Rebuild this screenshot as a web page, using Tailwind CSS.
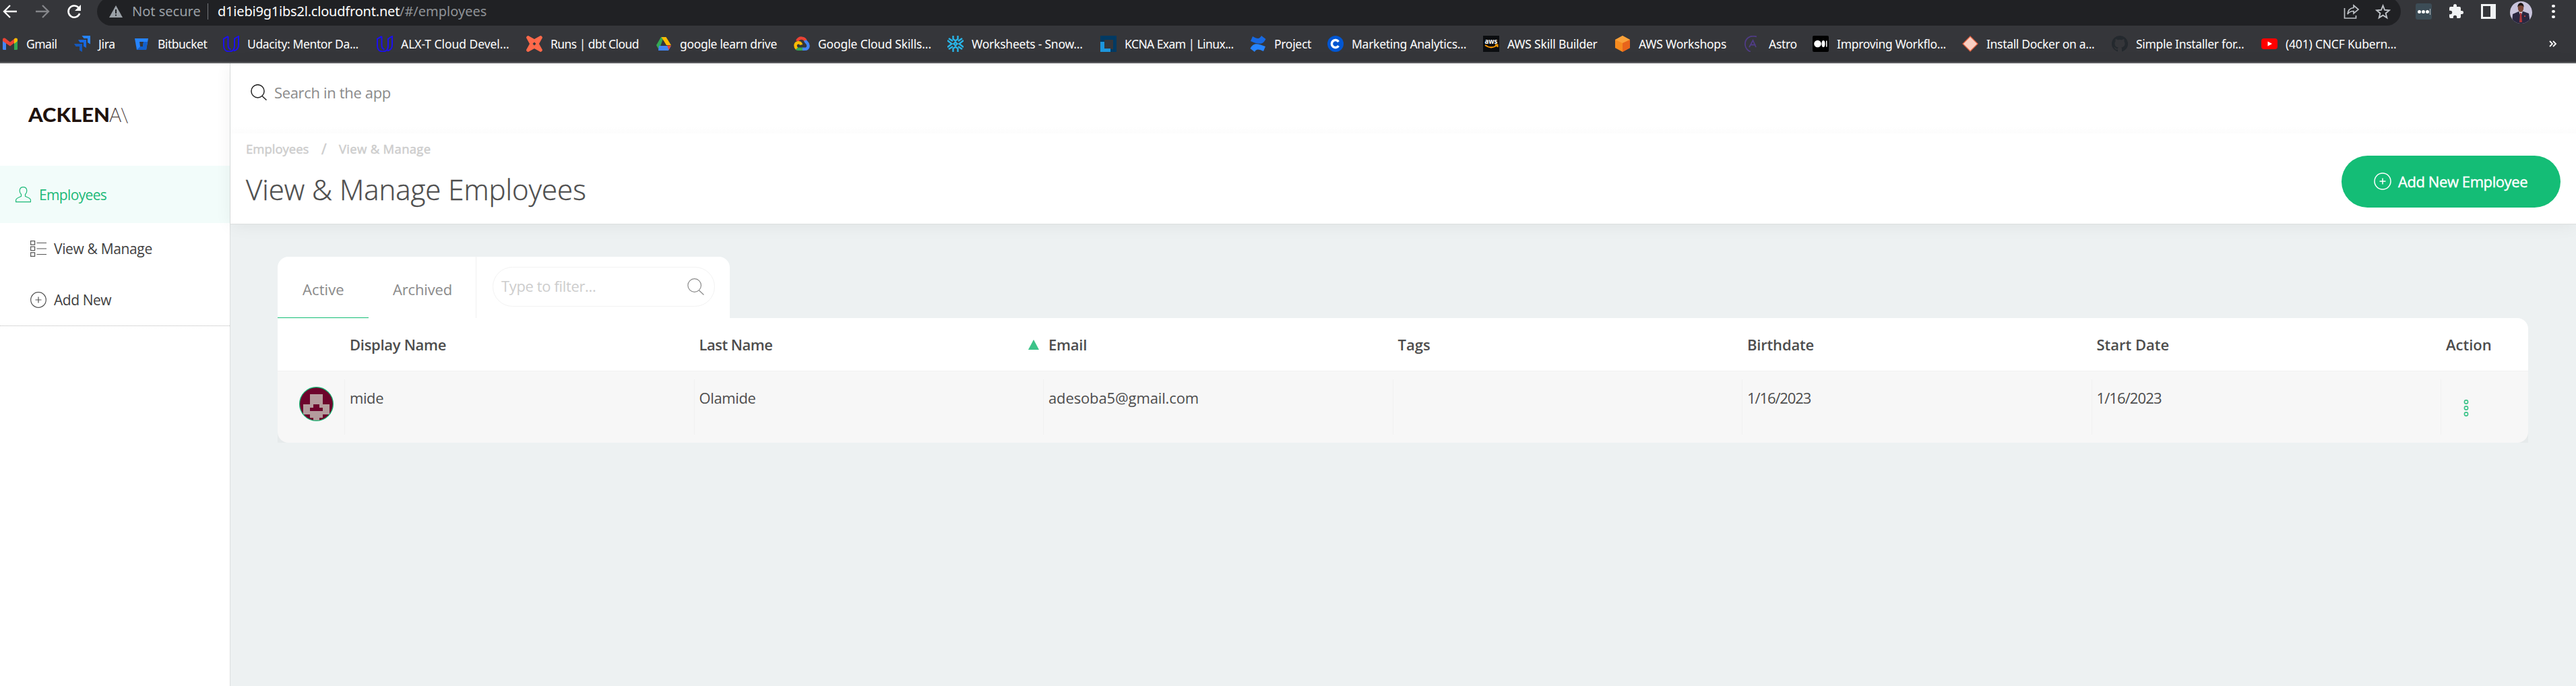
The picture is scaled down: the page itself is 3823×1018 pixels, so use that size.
<!DOCTYPE html>
<html lang="en">
<head>
<meta charset="utf-8">
<title>Employees</title>
<script src="https://cdn.jsdelivr.net/npm/@tailwindcss/browser@4"></script>
</head>
<body class="w-[3823px] h-[1018px] overflow-hidden flex flex-col bg-[#edf1f2] font-['Open_Sans',sans-serif] text-[#4d4d4d] whitespace-nowrap">

<!-- Browser toolbar -->
<div class="h-[94px] shrink-0 bg-[#35363a] border-b-2 border-[#5f6063] font-['Noto_Sans',sans-serif] text-white">
  <div class="h-[38px] flex items-start overflow-hidden">
    <div class="w-[144px] h-[34px] shrink-0 flex items-center pl-[3px]">
      <svg class="w-6 h-6 mr-[24px]" viewBox="0 0 24 24" fill="none" stroke="#fff" stroke-width="2.3"><path d="M22 12H3M12 3l-9 9 9 9"/></svg>
      <svg class="w-6 h-6 mr-[23px]" viewBox="0 0 24 24" fill="none" stroke="#85868a" stroke-width="2.3"><path d="M2 12h19M12 3l9 9-9 9"/></svg>
      <svg class="w-6 h-6" viewBox="0 0 24 24" fill="none" stroke="#fff" stroke-width="2.6"><path d="M20.2 15a8.6 8.6 0 1 1-1.8-8.8"/><path d="M22 2v9h-9z" fill="#fff" stroke="none"/></svg>
    </div>
    <div class="w-[3419px] h-[42px] -mt-1 rounded-full shrink-0 bg-[#202124] flex items-center text-[20px] leading-6 pl-[18px] pr-[15px]">
      <svg class="w-5 h-[18px] mr-[14px]" viewBox="0 0 20 18"><path d="M10 0l10 18H0z" fill="#9aa0a6"/><path d="M9 6h2v6H9zM9 13.500h2v2H9z" fill="#202124"/></svg>
      <span class="w-[101px] text-[#9aa0a6]">Not secure</span>
      <span class="w-px h-6 bg-[#74777b] mx-[10px] ml-[11px]"></span>
      <span class="w-[270px] ml-[4px] tracking-[-0.2px]">d1iebi9g1ibs2l.cloudfront.net</span>
      <span class="text-[#8f9296]">/#/employees</span>
      <svg class="ml-auto w-6 h-[22px]" viewBox="0 0 24 22" fill="none" stroke="#bdc1c6" stroke-width="1.7"><path d="M1.500 6v15h17v-4M15 2l7 6-7 6v-3.500c-4.500 0-7 1.500-9 4.500.5-5 3-9 9-9.500z"/></svg>
      <svg class="ml-[23px] w-[23px] h-[23px]" viewBox="0 0 24 24" fill="none" stroke="#bdc1c6" stroke-width="2"><path d="M12 2.500l2.700 6.700 7.100.5-5.500 4.600 1.800 7-6.100-3.900-6.100 3.900 1.800-7-5.500-4.600 7.100-.5z"/></svg>
    </div>
    <div class="flex items-center h-[34px] pl-[22px]">
      <div class="w-6 h-6 rounded-[3px] bg-[#3c4c56] flex items-center justify-center gap-[1px]"><i class="size-[5px] rounded-full bg-white"></i><i class="size-[5px] rounded-full bg-white"></i><i class="size-[5px] rounded-full bg-white"></i><i class="w-px h-[9px] bg-[#b8c0c5]"></i></div>
      <svg class="ml-[24px] w-6 h-6" viewBox="0 0 24 24" fill="#f1f3f4"><path d="M20.500 11H19V7a2 2 0 0 0-2-2h-4V3.500a2.500 2.500 0 0 0-5 0V5H4a2 2 0 0 0-2 2v3.800h1.500a2.700 2.700 0 0 1 0 5.400H2V20a2 2 0 0 0 2 2h3.800v-1.500a2.700 2.700 0 0 1 5.400 0V22H17a2 2 0 0 0 2-2v-4h1.500a2.500 2.500 0 0 0 0-5z"/></svg>
      <div class="ml-[25px] w-[22px] h-[22px] border-3 border-[#f1f3f4] flex justify-end"><i class="w-[5px] h-full bg-[#f1f3f4]"></i></div>
      <svg class="ml-[21px] mt-[2px] w-[33px] h-[33px]" viewBox="0 0 33 33"><clipPath id="av"><circle cx="16.500" cy="16.500" r="16.500"/></clipPath><g clip-path="url(#av)"><path fill="#c9c4dc" d="M0 0h33v33H0z"/><path fill="#2a2740" d="M3 33l1-14 9-4h7l8 3 2 15z"/><path fill="#e8e3ee" d="M13 14l3 9 3-9z"/><path fill="#b3363a" d="M15 17h2l1 14h-4zM21 21h2v2h-2z"/><ellipse cx="16" cy="10" rx="4.200" ry="6" fill="#7a4536"/><path fill="#1c1513" d="M11.500 9c-1-9 10-9 9 0-1-4-8-4-9 0z"/></g></svg>
      <div class="ml-[29px] flex flex-col gap-[3.500px]"><i class="size-[4.500px] rounded-full bg-white"></i><i class="size-[4.500px] rounded-full bg-white"></i><i class="size-[4.500px] rounded-full bg-white"></i></div>
    </div>
  </div>
  <!-- Bookmarks -->
  <div class="h-[54px] flex items-center text-[17.5px] leading-6 pl-[3px] [&>svg]:w-6 [&>svg]:h-6 [&>svg]:shrink-0 [&>svg]:mr-3 [&>span]:shrink-0">
    <svg viewBox="0 0 24 24"><path fill="#4285f4" d="M1 6h5v15H2.500A1.500 1.500 0 0 1 1 19.500z"/><path fill="#34a853" d="M18 6h5v13.500a1.500 1.500 0 0 1-1.500 1.500H18z"/><path fill="#ea4335" d="M1 7V5.500C1 3.500 3.500 3 5 4l7 5.500L19 4v6l-7 5.500L1 8z"/><path fill="#fbbc04" d="M18 5l1-1c2-1 4 0 4 1.800V8l-5 4z"/></svg><span class="w-[71px] tracking-[-0.5px]">Gmail</span>
    <svg viewBox="0 0 24 24" fill="#2684ff"><path d="M11.500 0H24v12.500l-4-2.500V4h-5.500z"/><path fill="#1868e0" d="M6 6h12v12l-4-2.300V10H8.500z"/><path fill="#1558bc" d="M0 12h12v12l-4-2.300V16H2.500z"/></svg><span class="w-[52px] tracking-[-0.3px]">Jira</span>
    <svg viewBox="0 0 24 24"><path fill="#2684ff" d="M2 4h20l-3 17H5z"/><path fill="#35363a" d="M9 9h6l-1 7h-4z"/><path fill="#1360cc" d="M15 9h6l-2 12H5l5-5h4z"/></svg><span class="w-[97px] tracking-[-0.5px]">Bitbucket</span>
    <svg viewBox="0 0 24 24" fill="none" stroke="#1c10ee" stroke-width="2"><path d="M7.500 1L1 4.500V15c0 5 3 8.500 8 8.500 6 0 8-4 8-8.500V4.500L23 1v13c0 5-3 7.500-7 8.500M7.500 1v13c0 4 1.500 5.500 4 6.500"/></svg><span class="w-[192px] tracking-[-0.37px]">Udacity: Mentor Da...</span>
    <svg viewBox="0 0 24 24" fill="none" stroke="#1c10ee" stroke-width="2"><path d="M7.500 1L1 4.500V15c0 5 3 8.500 8 8.500 6 0 8-4 8-8.500V4.500L23 1v13c0 5-3 7.500-7 8.500M7.500 1v13c0 4 1.500 5.500 4 6.500"/></svg><span class="w-[186px] tracking-[-0.05px]">ALX-T Cloud Devel...</span>
    <svg viewBox="0 0 24 24"><path fill="#ff694a" d="M3 0l9 5 9-5c2 0 3 2 3 3l-5 9 5 9c0 2-2 3-3 3l-9-5-9 5c-2 0-3-2-3-3l5-9-5-9c0-2 2-3 3-3z"/><path fill="#35363a" d="M12 9.500l2.500 2.500-2.500 2.500L9.500 12z"/></svg><span class="w-[156px] tracking-[-0.55px]">Runs | dbt Cloud</span>
    <svg viewBox="0 0 24 24"><path fill="#34a853" d="M8 2h4l-7 19L1 14z"/><path fill="#fbbc04" d="M8.500 2h7L23 14h-7z"/><path fill="#4285f4" d="M5 15h18l-4 7H4z"/><path fill="#ea4335" d="M17 14.500h6L19.500 21z"/><path fill="#35363a" d="M12 8l3 6.500H9z"/></svg><span class="w-[169px] tracking-[-0.32px]">google learn drive</span>
    <svg viewBox="0 0 24 24" fill="none" stroke-width="4.500"><path stroke="#ea4335" d="M5 8c3-6.500 11-5 12.500-.5"/><path stroke="#4285f4" d="M17 7c1 3.500 4.500 3 4.500 8 0 3-2 4.800-5 4.800h-4"/><path stroke="#34a853" d="M13 19.800H7c-1.500 0-2.500-.5-3-1"/><path stroke="#fbbc04" d="M4.500 19c-3-3-2.500-7.500 1-8.500 3-1 5 .5 5.500 3"/></svg><span class="w-[192px] tracking-[-0.13px]">Google Cloud Skills...</span>
    <svg viewBox="0 0 24 24" fill="none" stroke="#29b5e8" stroke-width="2.400"><path d="M12 9.500l2.500 2.500-2.500 2.500L9.500 12zM8.500 0v5L12 7.500 15.500 5V0M8.500 24v-5l3.500-2.500 3.500 2.500v5M0 7l6.500 5L0 17M24 7l-6.500 5 6.500 5M2 4l6 4M22 4l-6 4M2 20l6-4M22 20l-6-4"/></svg><span class="w-[191px] tracking-[-0.23px]">Worksheets - Snow...</span>
    <svg viewBox="0 0 24 24"><path fill="#003a63" d="M0 0h24v24H0z"/><path fill="#35363a" d="M6 6h13v14H6z"/><path fill="#1d96dc" d="M0 9h6v10h9v5H0z"/></svg><span class="w-[186px] tracking-[-0.58px]">KCNA Exam | Linux...</span>
    <svg viewBox="0 0 24 24"><path fill="#1868e0" d="M23.500 5c-4 8-9 9-22.500 3l3-7c8 5 11 3 13-1z"/><path fill="#2684ff" d="M.5 19c4-8 9-9 22.500-3l-3 7c-8-4-11-3-13 1z"/></svg><span class="w-[79px] tracking-[-0.3px]">Project</span>
    <svg viewBox="0 0 24 24"><circle cx="12" cy="12" r="12" fill="#0056d2"/><path d="M16.500 9A5.500 5.500 0 1 0 16.500 15" fill="none" stroke="#fff" stroke-width="3.500"/></svg><span class="w-[195px] tracking-[-0.27px]">Marketing Analytics...</span>
    <svg viewBox="0 0 24 24"><path fill="#0b0d10" d="M0 0h24v24H0z"/><text x="2.500" y="12" fill="#fff" font-size="10" font-weight="700" textLength="19" lengthAdjust="spacingAndGlyphs">aws</text><path d="M3 14c6 4.500 12 4.500 18 0M18 13.500h3.500V17" fill="none" stroke="#f90" stroke-width="2"/></svg><span class="w-[159px] tracking-[-0.2px]">AWS Skill Builder</span>
    <svg viewBox="0 0 24 24"><path fill="#f68b1f" d="M12 0l11 6v12l-11 6L1 18V6z"/><path fill="#f9a13a" d="M12 0l11 6-11 5L1 6z"/><path fill="#e8641b" d="M12 11l11-5v12l-11 6z"/></svg><span class="w-[157px] tracking-[-0.22px]">AWS Workshops</span>
    <svg viewBox="0 0 24 24" fill="none" stroke="#503c86" stroke-width="1.800"><path d="M18 1.500C8-2 0 5 1 14c.5 4.500 4 8.500 8 9.500M7 17l5.500-10L17 17M9.500 13.500h7"/></svg><span class="w-[65px] tracking-[-0.3px]">Astro</span>
    <svg viewBox="0 0 24 24"><rect width="24" height="24" rx="2" fill="#000"/><circle cx="7.500" cy="12" r="5.300" fill="#fff"/><ellipse cx="16" cy="12" rx="2.500" ry="5" fill="#fff"/><path fill="#fff" d="M20 7.500h1.500v9H20z"/></svg><span class="w-[186px] tracking-[-0.3px]">Improving Workflo...</span>
    <svg viewBox="0 0 24 24"><path fill="#f9cfc2" stroke="#e2603e" stroke-width="1.300" d="M12 1l11 11-11 11L1 12z"/></svg><span class="w-[186px] tracking-[-0.32px]">Install Docker on a...</span>
    <svg viewBox="0 0 24 24"><path fill="#24292e" d="M12 0a12 12 0 0 0-3.800 23.400c.6.100.8-.3.800-.6v-2.200c-3.300.7-4-1.400-4-1.400-.6-1.400-1.400-1.800-1.400-1.800-1-.7.1-.7.1-.7 1.200 0 1.900 1.200 1.900 1.200 1 1.800 2.800 1.300 3.500 1 0-.8.400-1.300.700-1.600-2.600-.3-5.400-1.300-5.400-5.900 0-1.300.5-2.400 1.200-3.200-.1-.3-.5-1.500.1-3.200 0 0 1-.3 3.300 1.200a11 11 0 0 1 6 0c2.300-1.500 3.300-1.200 3.300-1.200.6 1.700.2 2.900.1 3.200.8.800 1.200 1.900 1.200 3.200 0 4.600-2.800 5.600-5.500 5.900.5.400.9 1.100.9 2.200v3.300c0 .3.200.7.800.6A12 12 0 0 0 12 0"/></svg><span class="w-[186px] tracking-[-0.3px]">Simple Installer for...</span>
    <svg viewBox="0 0 24 24"><rect y="4" width="24" height="16" rx="4" fill="#f00"/><path fill="#fff" d="M9.500 8.500l6.500 3.500-6.500 3.500z"/></svg><span class="w-[166px] tracking-[-0.2px]">(401) CNCF Kubern...</span>
    <svg class="ml-auto !mr-[23px]" viewBox="0 0 24 24" fill="none" stroke="#fff" stroke-width="1.800"><path d="M8 8l4 4-4 4M13 8l4 4-4 4"/></svg>
  </div>
</div>

<div class="flex flex-1 min-h-0">
  <!-- Sidebar -->
  <aside class="w-[342px] shrink-0 bg-white border-r border-[#dcdfdf] text-[21px] leading-7">
    <div class="h-[152px] pt-[60px] pl-[42px]">
      <svg class="w-[160px] h-8" viewBox="0 0 160 32"><g font-family="Lato, sans-serif" font-size="28.500"><text x="0" y="27" font-weight="900" fill="#1f120d" textLength="121" lengthAdjust="spacingAndGlyphs">ACKLEN</text><text x="120" y="27" font-weight="300" fill="#4b403c" textLength="29" lengthAdjust="spacingAndGlyphs">A\</text></g></svg>
    </div>
    <a class="h-[85px] bg-[#f2fcfa] flex items-center pl-[23px] text-[#1cb978] tracking-[-0.65px]">
      <svg class="w-[23px] h-6 mr-3" viewBox="0 0 23 24" fill="none" stroke="#1cb978" stroke-width="1.200"><path d="M8.500 11.500C6.500 9.500 6 7 6.300 5 6.700 2 8.800.7 11.500.7S16.300 2 16.700 5c.3 2-.2 4.500-2.200 6.500v2.800c2 1.500 8 2 8 6v2.300H.6v-2.300c0-4 6-4.500 7.900-6z"/></svg>Employees
    </a>
    <a class="h-[76px] flex items-center pl-[45px] text-[#3f3f3f] tracking-[-0.35px]">
      <svg class="w-6 h-6 mr-[11px]" viewBox="0 0 24 24" fill="none" stroke="#555" stroke-width="1.200"><path d="M.6.600h6v5.500h-6zM.6 9.200h6v5.500h-6zM.6 17.800h6v5.500h-6zM9.500 3.500H24M9.500 12H24M9.500 20.500H24"/></svg>View &amp; Manage
    </a>
    <a class="h-[76px] flex items-center pl-[45px] text-[#3f3f3f] tracking-[-0.45px]">
      <svg class="w-6 h-6 mr-[11px]" viewBox="0 0 24 24" fill="none" stroke="#555" stroke-width="1.200"><circle cx="12" cy="12" r="11.300"/><path d="M12 7.500v9M7.500 12h9"/></svg>Add New
    </a>
    <div class="border-t border-dotted border-[#b5b5b5]"></div>
  </aside>

  <main class="flex-1 min-w-0">
    <!-- Global search and page header -->
    <header class="bg-white border-b border-[#dcdfdf] shadow-[0_2px_24px_rgba(0,0,0,0.06)] h-[239px] pl-[23px] pr-[23px] flex flex-col">
      <div class="h-[104px] shrink-0 -mx-[23px] px-[30px] pb-[19px] flex items-center text-[22px] leading-7 text-[#8a8a8a] tracking-[-0.34px] bg-linear-to-t from-[#fcfcfc] via-white via-10% to-white">
        <svg class="w-6 h-6 mr-[11px]" viewBox="0 0 24 24" fill="none" stroke="#222" stroke-width="1.500"><circle cx="10.500" cy="10.300" r="9.600"/><path d="M17 17.500l6.500 6"/></svg>Search in the app
      </div>
      <div class="flex flex-1 items-start justify-between">
        <div>
          <div class="mt-[9px] h-7 flex text-[18.5px] leading-7 text-[#cdcdcd] [-webkit-text-stroke:0.5px_#cdcdcd]"><span class="w-[112px]">Employees</span><span class="w-[26px] text-[21px]">/</span><span class="tracking-[0.3px]">View &amp; Manage</span></div>
          <h1 class="mt-[18px] text-[42px] leading-[56px] font-light text-[#4d4d4d] [-webkit-text-stroke:0.4px_#4d4d4d]">View &amp; Manage Employees</h1>
        </div>
        <button class="mt-[33px] w-[325px] h-[77px] rounded-full bg-[#14bd76] text-white text-[22px] leading-7 flex items-center pl-[48px] pb-px tracking-[-0.42px] [-webkit-text-stroke:0.4px_#fff]">
          <svg class="w-[26px] h-[26px] mr-[10px]" viewBox="0 0 26 26" fill="none" stroke="#fff" stroke-width="1.500"><circle cx="13" cy="13" r="12"/><path d="M13 8.500v9M8.500 13h9"/></svg>Add New Employee
        </button>
      </div>
    </header>

    <section class="pt-[48px] pl-[70px] pr-[71px] text-[22px] leading-7">
      <!-- Tabs and filter -->
      <div class="w-[671px] h-[91px] bg-white rounded-t-[16px] flex text-[#8a8a8a]">
        <div class="w-[135px] pl-[37px] pt-[34px] border-b border-[#14bd76] tracking-[0.1px]">Active</div>
        <div class="w-[160px] pl-[36px] pt-[34px] border-r border-[#f0f0f0] tracking-[-0.15px]">Archived</div>
        <div class="ml-[24px] mt-[15px] w-[330px] h-[59px] rounded-full border border-[#f2f2f2] flex items-center pl-[12px] pb-[3px] text-[#cdcdcd] tracking-[-0.36px]">
          <span class="flex-1">Type to filter...</span>
          <svg class="w-[25px] h-[25px] mr-[15px] mt-[3px]" viewBox="0 0 25 25" fill="none" stroke="#8a8a8a" stroke-width="1.200"><circle cx="10.700" cy="10.500" r="9.800"/><path d="M17.500 18l7 6.500"/></svg>
        </div>
      </div>
      <!-- Employee table -->
      <div class="grid grid-cols-[99px_repeat(6,minmax(0,1fr))_130px] h-[79px] items-center bg-white rounded-tr-[16px] font-semibold border-b border-[#f2f2f2] [&>div]:pl-2">
        <div></div>
        <div class="tracking-[-0.3px]">Display Name</div>
        <div class="flex justify-between items-center pr-[6px] tracking-[-0.5px]">Last Name<svg class="w-4 h-[15px]" viewBox="0 0 16 15"><path d="M8 0l8 15H0z" fill="#3cc389"/></svg></div>
        <div class="tracking-[-0.25px]">Email</div>
        <div>Tags</div>
        <div class="tracking-[-0.18px]">Birthdate</div>
        <div>Start Date</div>
        <div>Action</div>
      </div>
      <div class="bg-[#e6eaeb]">
        <div class="grid grid-cols-[99px_repeat(6,minmax(0,1fr))_130px] h-[106px] py-3 bg-[#f7f7f7] rounded-b-[16px] [&>div]:border-l [&>div]:border-[#f1f1f1] [&>div]:pl-[7px] [&>div]:pt-[13px]">
          <figure class="pl-8 pt-[11px]">
            <svg class="w-[51px] h-[51px]" viewBox="0 0 51 51"><clipPath id="id"><circle cx="25.500" cy="25.500" r="25"/></clipPath><g clip-path="url(#id)"><path fill="#6d042c" d="M0 0h51v51H0z"/><path fill="#b49c9d" d="M16 11h19v15h10v15H35v5h-5v5h-9v-5h-5v-5H6V26h10zM21 26v5h-5v5h19v-5h-5v-5z" fill-rule="evenodd"/></g><circle cx="25.500" cy="25.500" r="24.900" fill="none" stroke="#14bd76" stroke-width="1.200"/></svg>
          </figure>
          <div class="tracking-[-0.4px]">mide</div>
          <div class="tracking-[-0.37px]">Olamide</div>
          <div class="tracking-[-0.13px]">adesoba5@gmail.com</div>
          <div></div>
          <div class="tracking-[-1.1px]">1/16/2023</div>
          <div class="tracking-[-0.9px]">1/16/2023</div>
          <div><svg class="ml-[26px] mt-[17px] w-2 h-[25px]" viewBox="0 0 8 25" fill="none" stroke="#3cc389" stroke-width="1.600"><circle cx="4" cy="3.500" r="2.600"/><circle cx="4" cy="12.500" r="2.600"/><circle cx="4" cy="21.500" r="2.600"/></svg></div>
        </div>
      </div>
    </section>
  </main>
</div>
</body>
</html>
